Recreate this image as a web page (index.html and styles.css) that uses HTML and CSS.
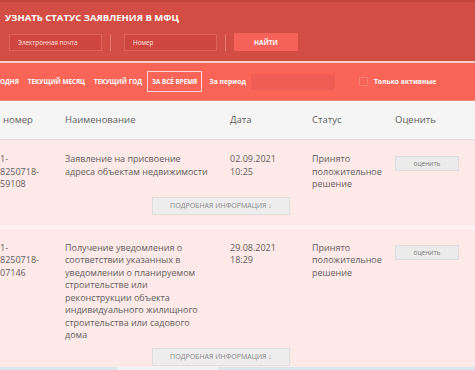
FILE: index.html
```html
<!DOCTYPE html>
<html lang="ru">

<head>
    <meta charset="UTF-8">
    <meta name="viewport" content="width=device-width, initial-scale=1.0">
    <title>Узнать статус заявления в МФЦ</title>
    <link rel="stylesheet" href="styles.css">
</head>

<body>
    <div class="search-section">
        <h1>Узнать статус заявления в МФЦ</h1>
        <div class="search-form">
            <input type="text" class="search-input" placeholder="Электронная почта">
            <span class="divider"></span>
            <input type="text" class="search-input" placeholder="Номер">
            <span class="divider"></span>
            <button class="search-button">Найти</button>
        </div>
    </div>

    <div class="filter-bar">
        <span class="filter-item">одня</span>
        <span class="filter-item">Текущий месяц</span>
        <span class="filter-item">Текущий год</span>
        <span class="filter-item active">За всё время</span>
        <label class="period">За период <input type="text" class="period-input"></label>
        <label class="only-active"><span class="checkbox"></span>Только активные</label>
    </div>

    <div class="results">
        <div class="row head">
            <div>номер</div>
            <div>Наименование</div>
            <div>Дата</div>
            <div>Статус</div>
            <div>Оценить</div>
        </div>

        <div class="item">
            <div class="row">
                <div>1-<br>8250718-<br>59108</div>
                <div>Заявление на присвоение адреса объектам недвижимости</div>
                <div>02.09.2021<br>10:25</div>
                <div>Принято положительное решение</div>
                <div><button class="rate-button">оценить</button></div>
            </div>
            <button class="details-button">Подробная информация ↓</button>
        </div>

        <div class="item">
            <div class="row">
                <div>1-<br>8250718-<br>07146</div>
                <div>Получение уведомления о соответствии указанных в уведомлении о планируемом строительстве или реконструкции объекта индивидуального жилищного строительства или садового дома</div>
                <div>29.08.2021<br>18:29</div>
                <div>Принято положительное решение</div>
                <div><button class="rate-button">оценить</button></div>
            </div>
            <button class="details-button">Подробная информация ↓</button>
        </div>
    </div>

    <div class="taskbar"></div>
</body>

</html>
```

FILE: styles.css
```css
body {
    margin: 0;
    font-family: "Open Sans", Arial, sans-serif;
    background-color: #fde9e7;
    overflow: hidden;
    height: 370px;
    position: relative;
}

.search-section {
    height: 61px;
    padding: 0 0 0 5px;
    background-color: #d24d43;
    border-top: 2px solid #c4443b;
    box-sizing: border-box;
}

h1 {
    margin: 0;
    padding-top: 9px;
    font-size: 9.5px;
    font-weight: bold;
    text-transform: uppercase;
    color: #fff;
    line-height: 13px;
}

.search-form {
    display: flex;
    align-items: center;
    margin-top: 9px;
    padding-left: 4px;
}

.search-input {
    width: 93px;
    height: 17px;
    box-sizing: border-box;
    padding: 0 8px;
    border: 1px solid #dd6258;
    background-color: #cf463f;
    font-family: inherit;
    font-size: 6.3px;
    color: #fff;
}

.search-input::placeholder {
    color: #fbe4e0;
}

.divider {
    width: 1px;
    height: 17px;
    margin: 0 13px 0 8px;
    background-color: #e27a70;
}

.divider:last-of-type {
    margin: 0 8px 0 8px;
}

.search-button {
    width: 64px;
    height: 18px;
    border: none;
    background-color: #f4625a;
    color: #fff;
    font-family: inherit;
    font-size: 6.5px;
    font-weight: bold;
    text-transform: uppercase;
}

.filter-bar {
    display: flex;
    align-items: center;
    height: 37px;
    border-top: 2px solid #f7cfc7;
    background-color: #fa6558;
    border-bottom: 1px solid #f08a80;
    font-size: 6.3px;
    font-weight: bold;
    color: #fff;
}

.filter-item {
    text-transform: uppercase;
    margin-right: 9px;
}

.filter-item:nth-child(3) {
    margin-right: 5px;
}

.filter-item.active {
    margin-right: 6px;
    padding: 5px 4px;
    border: 1.5px solid #fbd6d0;
}

.period {
    display: flex;
    align-items: center;
    margin-left: 1px;
    font-size: 6.8px;
}

.period-input {
    width: 84px;
    height: 16px;
    margin-left: 5px;
    box-sizing: border-box;
    border: none;
    background-color: #ef5d55;
}

.only-active {
    display: flex;
    align-items: center;
    margin-left: 24px;
    font-size: 6.8px;
}

.checkbox {
    width: 7px;
    height: 7px;
    margin-right: 6px;
    border: 1px solid #f77a6f;
    background-color: #f76458;
}

.results {
    color: #5f5f5f;
    font-size: 9px;
    line-height: 12.5px;
}

.row {
    display: grid;
    grid-template-columns: 65px 165px 82px 83px 80px;
}

.row div {
    padding-right: 18px;
}

.row div:first-child {
    padding-right: 4px;
}

.row.head {
    height: 38px;
    align-items: center;
    background-color: #f5f5f5;
    border-bottom: 1px solid #e6dcdb;
    font-size: 9.5px;
}

.row.head div:first-child {
    padding-left: 3px;
}

.item {
    padding: 13px 0 10px;
    border-bottom: 4px solid #fdf2f1;
}

.item .row div:last-child {
    padding-top: 3px;
}

.rate-button {
    width: 64px;
    height: 15px;
    padding: 0;
    border: 1px solid #dcdcdc;
    background-color: #ebebeb;
    font-family: inherit;
    font-size: 6.5px;
    color: #777;
}

.details-button {
    display: block;
    width: 138px;
    height: 18px;
    margin: 6px 0 0 152px;
    padding: 0;
    border: 1px solid #dedede;
    background-color: #ededed;
    font-family: inherit;
    font-size: 7px;
    text-transform: uppercase;
    color: #888;
}

.taskbar {
    position: absolute;
    left: 0;
    right: 0;
    bottom: 0;
    height: 3px;
    background: linear-gradient(to right, #d9e6ec 117px, #edf3f6 117px, #edf3f6 218px, #dae6ec 218px);
}
```
